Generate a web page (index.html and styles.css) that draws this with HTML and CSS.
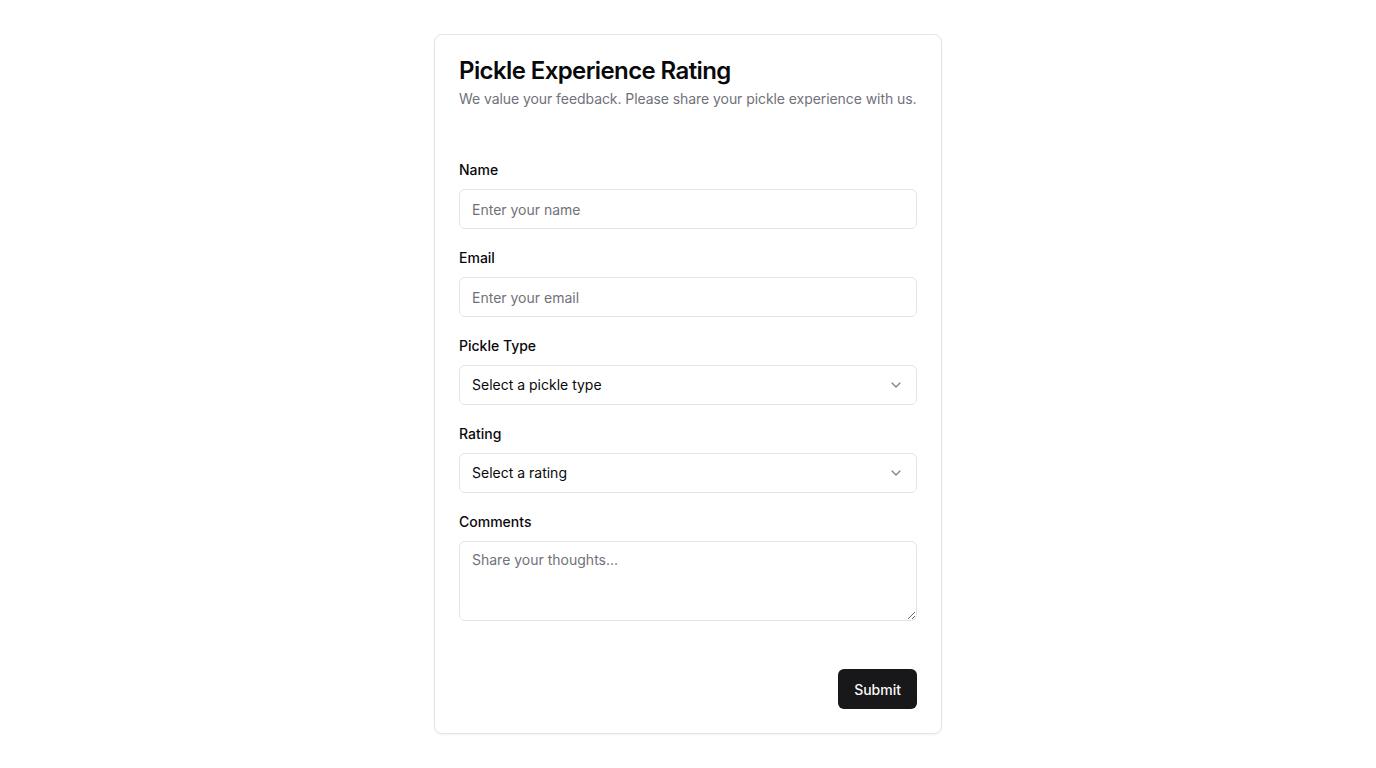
FILE: index.html
```html
<!DOCTYPE html>
<html lang="en">
<head>
<meta charset="utf-8">
<title>Pickle Experience Rating</title>
<link rel="stylesheet" href="styles.css">
</head>
<body>
<div class="card">
  <div class="card-header">
    <h1 class="card-title">Pickle Experience Rating</h1>
    <p class="card-desc">We value your feedback. Please share your pickle experience with us.</p>
  </div>
  <form class="card-content">
    <div class="field">
      <label class="label" for="name">Name</label>
      <input class="input" id="name" type="text" placeholder="Enter your name">
    </div>
    <div class="field">
      <label class="label" for="email">Email</label>
      <input class="input" id="email" type="email" placeholder="Enter your email">
    </div>
    <div class="field">
      <label class="label">Pickle Type</label>
      <button type="button" class="select">
        <span>Select a pickle type</span>
        <svg class="chev" viewBox="0 0 24 24" width="16" height="16" fill="none" stroke="currentColor" stroke-width="2" stroke-linecap="round" stroke-linejoin="round"><path d="m6 9 6 6 6-6"/></svg>
      </button>
    </div>
    <div class="field">
      <label class="label">Rating</label>
      <button type="button" class="select">
        <span>Select a rating</span>
        <svg class="chev" viewBox="0 0 24 24" width="16" height="16" fill="none" stroke="currentColor" stroke-width="2" stroke-linecap="round" stroke-linejoin="round"><path d="m6 9 6 6 6-6"/></svg>
      </button>
    </div>
    <div class="field">
      <label class="label" for="comments">Comments</label>
      <textarea class="textarea" id="comments" placeholder="Share your thoughts..."></textarea>
    </div>
  </form>
  <div class="card-footer">
    <button type="submit" class="btn">Submit</button>
  </div>
</div>
</body>
</html>
```

FILE: styles.css
```css
* { box-sizing: border-box; }
html, body { margin: 0; padding: 0; }
body {
  font-family: Inter, "Noto Sans", sans-serif;
  color: #09090b;
  background: #ffffff;
  min-height: 100vh;
  display: flex;
  align-items: center;
  justify-content: center;
}
.card {
  width: 508px;
  border: 1px solid #e4e4e7;
  border-radius: 8px;
  background: #fff;
  box-shadow: 0 1px 2px rgba(0,0,0,0.05);
}
.card-header {
  padding: 24px;
  display: flex;
  flex-direction: column;
  gap: 6px;
}
.card-title {
  margin: 0;
  font-size: 24px;
  line-height: 24px;
  font-weight: 600;
  letter-spacing: -0.025em;
}
.card-desc {
  margin: 0;
  font-size: 14px;
  line-height: 20px;
  color: #71717a;
  white-space: nowrap;
  letter-spacing: -0.07px;
}
.card-content {
  padding: 27px 24px 24px;
  display: flex;
  flex-direction: column;
  gap: 19px;
}
.field {
  display: flex;
  flex-direction: column;
  gap: 9px;
}
.label {
  font-size: 14px;
  line-height: 20px;
  font-weight: 500;
}
.input, .select, .textarea {
  width: 100%;
  border: 1px solid #e4e4e7;
  border-radius: 6px;
  background: #fff;
  font-family: inherit;
  font-size: 14px;
  color: #09090b;
  padding: 8px 12px;
  outline: none;
}
.input { height: 40px; line-height: 20px; }
.input::placeholder, .textarea::placeholder { color: #71717a; opacity: 1; }
.select {
  height: 40px;
  display: flex;
  align-items: center;
  justify-content: space-between;
  text-align: left;
  line-height: 20px;
  cursor: pointer;
}
.chev { opacity: 0.5; flex: none; }
.textarea {
  height: 80px;
  line-height: 20px;
  display: block;
  resize: vertical;
}
.card-footer {
  padding: 24px;
  display: flex;
  justify-content: flex-end;
}
.btn {
  height: 40px;
  padding: 0 16px;
  border: none;
  border-radius: 6px;
  background: #18181b;
  color: #fafafa;
  font-family: inherit;
  font-size: 14px;
  font-weight: 500;
  cursor: pointer;
}
```
